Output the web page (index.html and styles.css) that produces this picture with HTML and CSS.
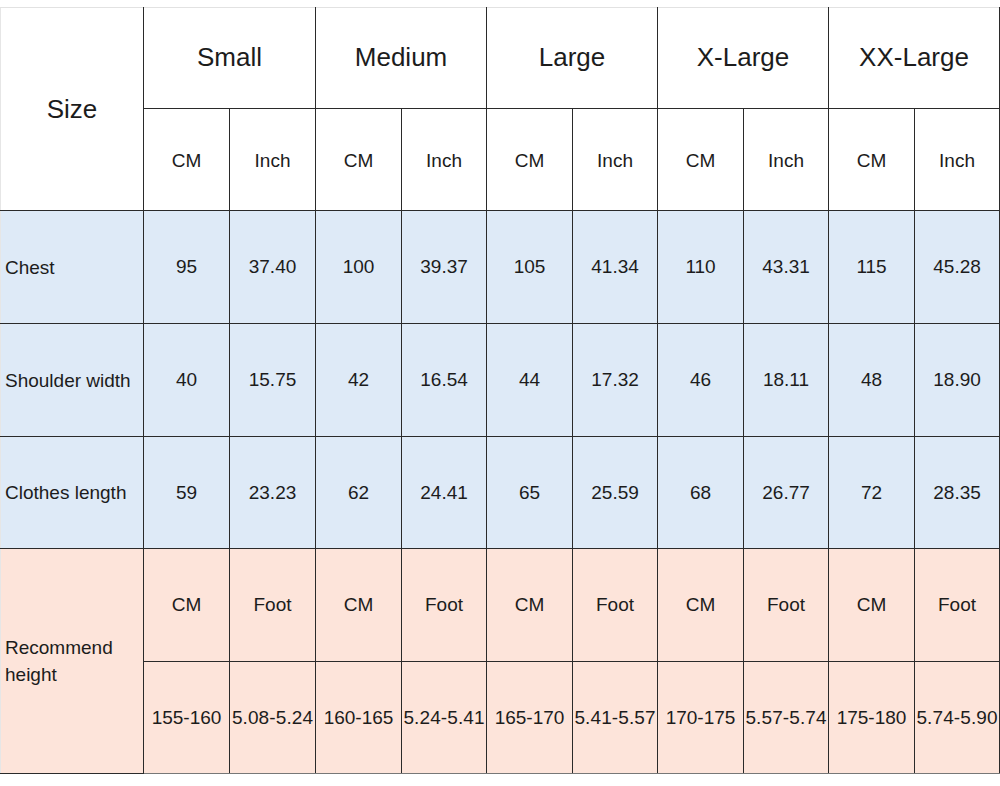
FILE: index.html
```html
<!DOCTYPE html>
<html>
<head>
<meta charset="utf-8">
<link rel="stylesheet" href="styles.css">
</head>
<body>
<table class="chart">
  <colgroup>
    <col class="c-label">
    <col class="c-a"><col class="c-a"><col class="c-a"><col class="c-b">
    <col class="c-a"><col class="c-b"><col class="c-a"><col class="c-b">
    <col class="c-a"><col class="c-b">
  </colgroup>
  <tr class="r-head">
    <td class="size" rowspan="2">Size</td>
    <td class="big" colspan="2">Small</td>
    <td class="big" colspan="2">Medium</td>
    <td class="big" colspan="2">Large</td>
    <td class="big" colspan="2">X-Large</td>
    <td class="big" colspan="2">XX-Large</td>
  </tr>
  <tr class="r-unit">
    <td>CM</td><td>Inch</td><td>CM</td><td>Inch</td><td>CM</td><td>Inch</td><td>CM</td><td>Inch</td><td>CM</td><td>Inch</td>
  </tr>
  <tr class="r-data blue first">
    <td class="label">Chest</td>
    <td>95</td><td>37.40</td><td>100</td><td>39.37</td><td>105</td><td>41.34</td><td>110</td><td>43.31</td><td>115</td><td>45.28</td>
  </tr>
  <tr class="r-data blue">
    <td class="label">Shoulder width</td>
    <td>40</td><td>15.75</td><td>42</td><td>16.54</td><td>44</td><td>17.32</td><td>46</td><td>18.11</td><td>48</td><td>18.90</td>
  </tr>
  <tr class="r-data3 blue">
    <td class="label">Clothes length</td>
    <td>59</td><td>23.23</td><td>62</td><td>24.41</td><td>65</td><td>25.59</td><td>68</td><td>26.77</td><td>72</td><td>28.35</td>
  </tr>
  <tr class="r-data pink">
    <td class="label" rowspan="2">Recommend<br>height</td>
    <td>CM</td><td>Foot</td><td>CM</td><td>Foot</td><td>CM</td><td>Foot</td><td>CM</td><td>Foot</td><td>CM</td><td>Foot</td>
  </tr>
  <tr class="r-data3 pink last">
    <td>155-160</td><td class="tight">5.08-5.24</td><td>160-165</td><td class="tight">5.24-5.41</td><td>165-170</td><td class="tight">5.41-5.57</td><td>170-175</td><td class="tight">5.57-5.74</td><td>175-180</td><td class="tight">5.74-5.90</td>
  </tr>
</table>
</body>
</html>
```
FILE: styles.css
```css
html, body {
  margin: 0;
  padding: 0;
  background: #ffffff;
}
body {
  padding-top: 7px;
  font-family: "Liberation Sans", Arial, sans-serif;
  color: #1c1c1c;
}
.chart {
  border-collapse: collapse;
  table-layout: fixed;
  width: 1000px;
  border-top: 1px solid #e2e2e2;
  border-left: 1px solid #e6e6e6;
  border-bottom: 1px solid #777777;
}
.c-label { width: 143px; }
.c-a { width: 86px; }
.c-b { width: 85px; }
.chart td {
  border: 1px solid #2a2a2a;
  text-align: center;
  vertical-align: middle;
  font-size: 19px;
  padding: 0;
  overflow: hidden;
  white-space: nowrap;
}
.chart tr td:first-child { border-left: 1px solid #e6e6e6; }
.chart tr:first-child td { border-top: 1px solid #e2e2e2; }
.chart tr.last td { border-bottom: 1px solid #777777; }
.chart .r-unit + tr td { border-top-color: #566577; }
.r-head { height: 101px; }
.r-unit { height: 102px; }
.r-data { height: 113px; }
.r-data3 { height: 112px; }
.chart td.big { font-size: 26px; padding-bottom: 2px; }
.chart td.size { font-size: 26px; }
.r-unit td { padding-top: 2px; }
.blue td { background: #deeaf7; }
.pink td { background: #fde4da; }
.chart td.label {
  text-align: left;
  padding-left: 4px;
  white-space: normal;
  line-height: 27px;
}
.chart td.tight { letter-spacing: 0.1px; }
```
